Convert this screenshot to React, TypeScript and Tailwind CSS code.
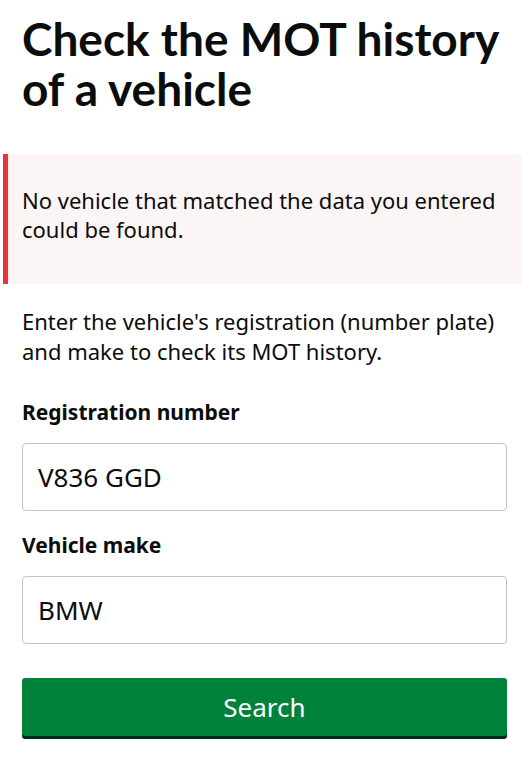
import React from "react";

export default function App() {
  const font = { fontFamily: '"Noto Sans", Arial, sans-serif' };
  return (
    <div className="w-[529px] min-h-[767px] bg-white text-[#0b0c0c]" style={font}>
      <h1 className="pl-[22px] pr-[4px] pt-[14px] text-[46px] leading-[50px] font-bold tracking-[0px] font-['Lato',sans-serif]">
        Check the MOT history of a vehicle
      </h1>
      <div className="mt-[40px] ml-[3px] mr-[7px] h-[130px] border-l-[5px] border-[#e5343a] bg-[#fcf5f5] pl-[14px] pr-[10px] pt-[32px]">
        <p className="text-[22px] leading-[29px]">
          No vehicle that matched the data you entered could be found.
        </p>
      </div>
      <p className="mt-[22px] px-[22px] text-[22px] leading-[30px]">
        Enter the vehicle's registration (number plate) and make to check its MOT history.
      </p>
      <div className="mt-[34px] px-[22px]">
        <label className="block text-[21px] leading-[25px] font-bold">Registration number</label>
        <div className="mt-[18px] flex h-[68px] items-center rounded-[4px] border border-[#c4c4c4] px-[15px] text-[26px]">
          V836 GGD
        </div>
        <label className="mt-[22px] block text-[21px] leading-[25px] font-bold">Vehicle make</label>
        <div className="mt-[18px] flex h-[68px] items-center rounded-[4px] border border-[#c4c4c4] px-[15px] text-[26px]">
          BMW
        </div>
        <button className="mt-[34px] flex h-[58px] w-full items-center justify-center rounded-[3px] bg-[#00823b] text-[26px] text-white shadow-[0_3px_0_#002d18]">
          Search
        </button>
      </div>
    </div>
  );
}
